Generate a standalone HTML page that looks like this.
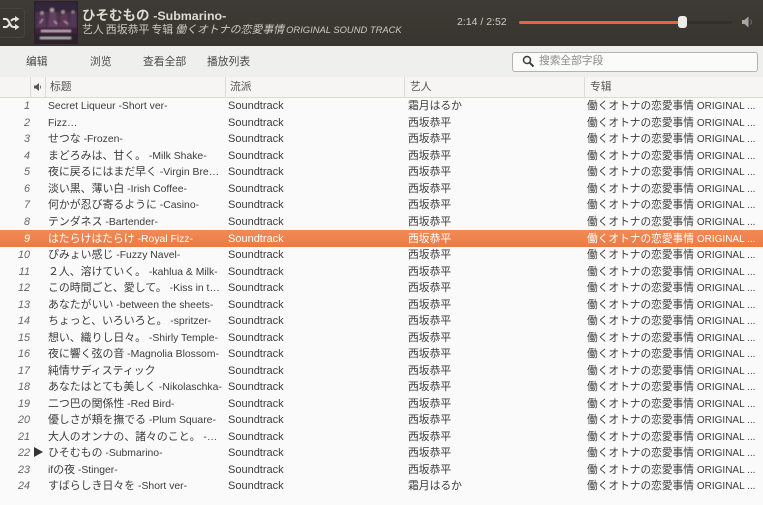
<!DOCTYPE html>
<html><head><meta charset="utf-8">
<style>
html,body{margin:0;padding:0;width:763px;height:505px;overflow:hidden;background:#fafafa;font-family:"Liberation Sans","Noto Sans CJK JP",sans-serif;font-size:11px;color:#3c3c3c}
div{position:absolute;white-space:nowrap}
u{text-decoration:none;font-size:10.4px}
s{text-decoration:none;font-size:10px}
.top{left:0;top:0;width:763px;height:46px;background:linear-gradient(#3e3b36,#38352f)}
.tb{left:0;top:46px;width:763px;height:31px;background:#efefed}
.tbt{top:54px;font-size:10.8px;color:#4a4a4a;line-height:16px}
.hd{left:0;top:77px;width:763px;height:20px;background:#f6f5f3;border-bottom:1px solid #dcdad6}
.sep{top:77px;width:1px;height:20px;background:#dcdad6}
.ht{top:79px;font-size:10.8px;color:#555;line-height:16px}
.r{left:0;width:763px;height:16.5px;line-height:16.5px}
.n{width:30px;left:0;text-align:right;font-style:italic;font-size:10.8px;color:#666;top:.5px}
.t{left:48px;top:.5px;font-size:10.9px}
.g{left:228px;top:.5px;font-size:11px}
.a{left:408px;top:.5px;font-size:10.8px}
.l{left:587px;top:.5px;font-size:10.7px}
.sel{background:linear-gradient(#f08a58,#ee7a42);color:#fff}
.sel .n{color:#fff}
</style></head><body>
<div class="top"></div>
<div style="left:-6px;top:8px;width:29px;height:28px;border:1px solid #47443f;border-radius:4px;background:#3b3833"></div>
<svg style="position:absolute;left:3px;top:16px" width="17" height="14" viewBox="0 0 17 14"><path d="M0 3h3c3 0 4 8 7 8h2M0 11h3c1.500 0 2.500-1.500 3.300-3M8 5c.8-1 1.500-2 3-2h1" fill="none" stroke="#e6e4e0" stroke-width="2"/><path d="M12 0l4.500 3L12 6zM12 8l4.500 3L12 14z" fill="#e6e4e0"/></svg>
<svg style="position:absolute;left:34px;top:1px" width="44" height="43" viewBox="0 0 44 43"><defs><filter id="b" x="0" y="0" width="100%" height="100%"><feGaussianBlur stdDeviation=".7"/></filter></defs><rect width="44" height="43" fill="#2e2030"/><g filter="url(#b)"><rect x="1" y="1" width="42" height="41" fill="#46304a"/><rect x="1" y="1" width="42" height="10" fill="#33263b"/><g opacity=".75"><path d="M3 26l3-14 5 2 1 12z" fill="#5d3f5e"/><path d="M14 26l2-16 6 1 2 15z" fill="#6e4a68"/><path d="M25 26l2-13 6 0 2 13z" fill="#6a3d5a"/><path d="M35 26l2-15 5 2v13z" fill="#553a58"/></g><circle cx="18" cy="9" r="2" fill="#b89aa0"/><circle cx="8" cy="12" r="1.700" fill="#a98c9c"/><circle cx="29" cy="11" r="1.700" fill="#ad8f9c"/><circle cx="39" cy="11" r="1.500" fill="#9a8094"/><path d="M6 22l3-4M20 20l3 3M30 20l4 3" stroke="#c8b2c0" stroke-width="1"/><rect x="1" y="27" width="42" height="6" fill="#3d2238"/><rect x="7" y="29" width="30" height="2" fill="#bfa6b8"/><rect x="1" y="33" width="42" height="9" fill="#2a2029"/><rect x="6" y="36" width="31" height="2" fill="#b5adb3"/></g></svg>
<div style="left:82px;top:7px;font-size:13.5px;font-weight:bold;color:#dfdbd2;line-height:18px">ひそむもの <span style="font-size:12.4px">-Submarino-</span></div>
<div style="left:82px;top:22px;font-size:10.9px;color:#cfcbc2;line-height:16px;word-spacing:-1px">艺人 西坂恭平 专辑 <i>働くオトナの恋愛事情 <span style="font-size:9.4px;word-spacing:0">ORIGINAL SOUND TRACK</span></i></div>
<div style="left:457px;top:15px;font-size:10.5px;color:#cfcbc2;line-height:15px">2:14 / 2:52</div>
<div style="left:519px;top:21px;width:213px;height:3px;background:#33302b;border-radius:2px"></div>
<div style="left:519px;top:21px;width:163px;height:3px;background:#e2683a;border-radius:2px"></div>
<div style="left:678px;top:16px;width:9px;height:12px;background:#eeece8;border-radius:3px"></div>
<svg style="position:absolute;left:741px;top:15px" width="14" height="14" viewBox="0 0 14 14"><path d="M1 5h2.500L7.500 1.500v11L3.500 9H1z" fill="#a9a7a2"/><path d="M9.500 4.500c1.200 1.500 1.200 3.500 0 5" fill="none" stroke="#66727f" stroke-width="1"/></svg>

<div class="tb"></div>
<div class="tbt" style="left:26px">编辑</div>
<div class="tbt" style="left:90px">浏览</div>
<div class="tbt" style="left:143px">查看全部</div>
<div class="tbt" style="left:207px">播放列表</div>
<div style="left:512px;top:52px;width:244px;height:18px;background:#fbfbfa;border:1px solid #b5b2ac;border-radius:3px"></div>
<svg style="position:absolute;left:522px;top:55px" width="13" height="13" viewBox="0 0 13 13"><circle cx="5" cy="5" r="3.500" fill="none" stroke="#3c3c3c" stroke-width="1.500"/><path d="M7.800 7.800l3.700 3.700" stroke="#3c3c3c" stroke-width="2"/></svg>
<div style="left:539px;top:54px;font-size:10.7px;color:#8a8a86;line-height:15px">搜索全部字段</div>

<div class="hd"></div>
<div class="sep" style="left:30px"></div><div class="sep" style="left:45px"></div><div class="sep" style="left:225px"></div><div class="sep" style="left:404px"></div><div class="sep" style="left:584px"></div>
<svg style="position:absolute;left:34px;top:83px" width="9" height="8" viewBox="0 0 9 8"><path d="M0 2.500h2L5 0v8L2 5.500H0z" fill="#555"/><path d="M6.500 2.500v3" stroke="#777"/></svg>
<div class="ht" style="left:50px">标题</div>
<div class="ht" style="left:230px">流派</div>
<div class="ht" style="left:410px">艺人</div>
<div class="ht" style="left:590px">专辑</div>

<div class="r" style="top:97.500px"><div class="n">1</div><div class="t"><u>Secret Liqueur -Short ver-</u></div><div class="g">Soundtrack</div><div class="a">霜月はるか</div><div class="l">働くオトナの恋愛事情 <s>ORIGINAL ...</s></div></div>
<div class="r" style="top:114px"><div class="n">2</div><div class="t"><u>Fizz…</u></div><div class="g">Soundtrack</div><div class="a">西坂恭平</div><div class="l">働くオトナの恋愛事情 <s>ORIGINAL ...</s></div></div>
<div class="r" style="top:130.500px"><div class="n">3</div><div class="t">せつな<u> -Frozen-</u></div><div class="g">Soundtrack</div><div class="a">西坂恭平</div><div class="l">働くオトナの恋愛事情 <s>ORIGINAL ...</s></div></div>
<div class="r" style="top:147px"><div class="n">4</div><div class="t">まどろみは、甘く。<u> -Milk Shake-</u></div><div class="g">Soundtrack</div><div class="a">西坂恭平</div><div class="l">働くオトナの恋愛事情 <s>ORIGINAL ...</s></div></div>
<div class="r" style="top:163.500px"><div class="n">5</div><div class="t">夜に戻るにはまだ早く<u> -Virgin Bre…</u></div><div class="g">Soundtrack</div><div class="a">西坂恭平</div><div class="l">働くオトナの恋愛事情 <s>ORIGINAL ...</s></div></div>
<div class="r" style="top:180px"><div class="n">6</div><div class="t">淡い黒、薄い白<u> -Irish Coffee-</u></div><div class="g">Soundtrack</div><div class="a">西坂恭平</div><div class="l">働くオトナの恋愛事情 <s>ORIGINAL ...</s></div></div>
<div class="r" style="top:196.500px"><div class="n">7</div><div class="t">何かが忍び寄るように<u> -Casino-</u></div><div class="g">Soundtrack</div><div class="a">西坂恭平</div><div class="l">働くオトナの恋愛事情 <s>ORIGINAL ...</s></div></div>
<div class="r" style="top:213px"><div class="n">8</div><div class="t">テンダネス<u> -Bartender-</u></div><div class="g">Soundtrack</div><div class="a">西坂恭平</div><div class="l">働くオトナの恋愛事情 <s>ORIGINAL ...</s></div></div>
<div class="r sel" style="top:230px"><div class="n">9</div><div class="t">はたらけはたらけ<u> -Royal Fizz-</u></div><div class="g">Soundtrack</div><div class="a">西坂恭平</div><div class="l">働くオトナの恋愛事情 <s>ORIGINAL ...</s></div></div>
<div class="r" style="top:246.500px"><div class="n">10</div><div class="t">ぴみょい感じ<u> -Fuzzy Navel-</u></div><div class="g">Soundtrack</div><div class="a">西坂恭平</div><div class="l">働くオトナの恋愛事情 <s>ORIGINAL ...</s></div></div>
<div class="r" style="top:263px"><div class="n">11</div><div class="t">２人、溶けていく。<u> -kahlua &amp; Milk-</u></div><div class="g">Soundtrack</div><div class="a">西坂恭平</div><div class="l">働くオトナの恋愛事情 <s>ORIGINAL ...</s></div></div>
<div class="r" style="top:279.500px"><div class="n">12</div><div class="t">この時間ごと、愛して。<u> -Kiss in t…</u></div><div class="g">Soundtrack</div><div class="a">西坂恭平</div><div class="l">働くオトナの恋愛事情 <s>ORIGINAL ...</s></div></div>
<div class="r" style="top:296px"><div class="n">13</div><div class="t">あなたがいい<u> -between the sheets-</u></div><div class="g">Soundtrack</div><div class="a">西坂恭平</div><div class="l">働くオトナの恋愛事情 <s>ORIGINAL ...</s></div></div>
<div class="r" style="top:312.500px"><div class="n">14</div><div class="t">ちょっと、いろいろと。<u> -spritzer-</u></div><div class="g">Soundtrack</div><div class="a">西坂恭平</div><div class="l">働くオトナの恋愛事情 <s>ORIGINAL ...</s></div></div>
<div class="r" style="top:329px"><div class="n">15</div><div class="t">想い、織りし日々。<u> -Shirly Temple-</u></div><div class="g">Soundtrack</div><div class="a">西坂恭平</div><div class="l">働くオトナの恋愛事情 <s>ORIGINAL ...</s></div></div>
<div class="r" style="top:345.500px"><div class="n">16</div><div class="t">夜に響く弦の音<u> -Magnolia Blossom-</u></div><div class="g">Soundtrack</div><div class="a">西坂恭平</div><div class="l">働くオトナの恋愛事情 <s>ORIGINAL ...</s></div></div>
<div class="r" style="top:362px"><div class="n">17</div><div class="t">純情サディスティック</div><div class="g">Soundtrack</div><div class="a">西坂恭平</div><div class="l">働くオトナの恋愛事情 <s>ORIGINAL ...</s></div></div>
<div class="r" style="top:378.500px"><div class="n">18</div><div class="t">あなたはとても美しく<u> -Nikolaschka-</u></div><div class="g">Soundtrack</div><div class="a">西坂恭平</div><div class="l">働くオトナの恋愛事情 <s>ORIGINAL ...</s></div></div>
<div class="r" style="top:395px"><div class="n">19</div><div class="t">二つ巴の関係性<u> -Red Bird-</u></div><div class="g">Soundtrack</div><div class="a">西坂恭平</div><div class="l">働くオトナの恋愛事情 <s>ORIGINAL ...</s></div></div>
<div class="r" style="top:411.500px"><div class="n">20</div><div class="t">優しさが頬を撫でる<u> -Plum Square-</u></div><div class="g">Soundtrack</div><div class="a">西坂恭平</div><div class="l">働くオトナの恋愛事情 <s>ORIGINAL ...</s></div></div>
<div class="r" style="top:428px"><div class="n">21</div><div class="t">大人のオンナの、諸々のこと。<u> -…</u></div><div class="g">Soundtrack</div><div class="a">西坂恭平</div><div class="l">働くオトナの恋愛事情 <s>ORIGINAL ...</s></div></div>
<div class="r" style="top:444.500px"><div class="n">22</div><div class="t">ひそむもの<u> -Submarino-</u></div><div class="g">Soundtrack</div><div class="a">西坂恭平</div><div class="l">働くオトナの恋愛事情 <s>ORIGINAL ...</s></div></div>
<div class="r" style="top:461px"><div class="n">23</div><div class="t"><u>if</u>の夜<u> -Stinger-</u></div><div class="g">Soundtrack</div><div class="a">西坂恭平</div><div class="l">働くオトナの恋愛事情 <s>ORIGINAL ...</s></div></div>
<div class="r" style="top:477.500px"><div class="n">24</div><div class="t">すばらしき日々を<u> -Short ver-</u></div><div class="g">Soundtrack</div><div class="a">霜月はるか</div><div class="l">働くオトナの恋愛事情 <s>ORIGINAL ...</s></div></div>
<svg style="position:absolute;left:34px;top:447px" width="9" height="10" viewBox="0 0 9 10"><path d="M0 0l9 5-9 5z" fill="#333"/></svg>
</body></html>
